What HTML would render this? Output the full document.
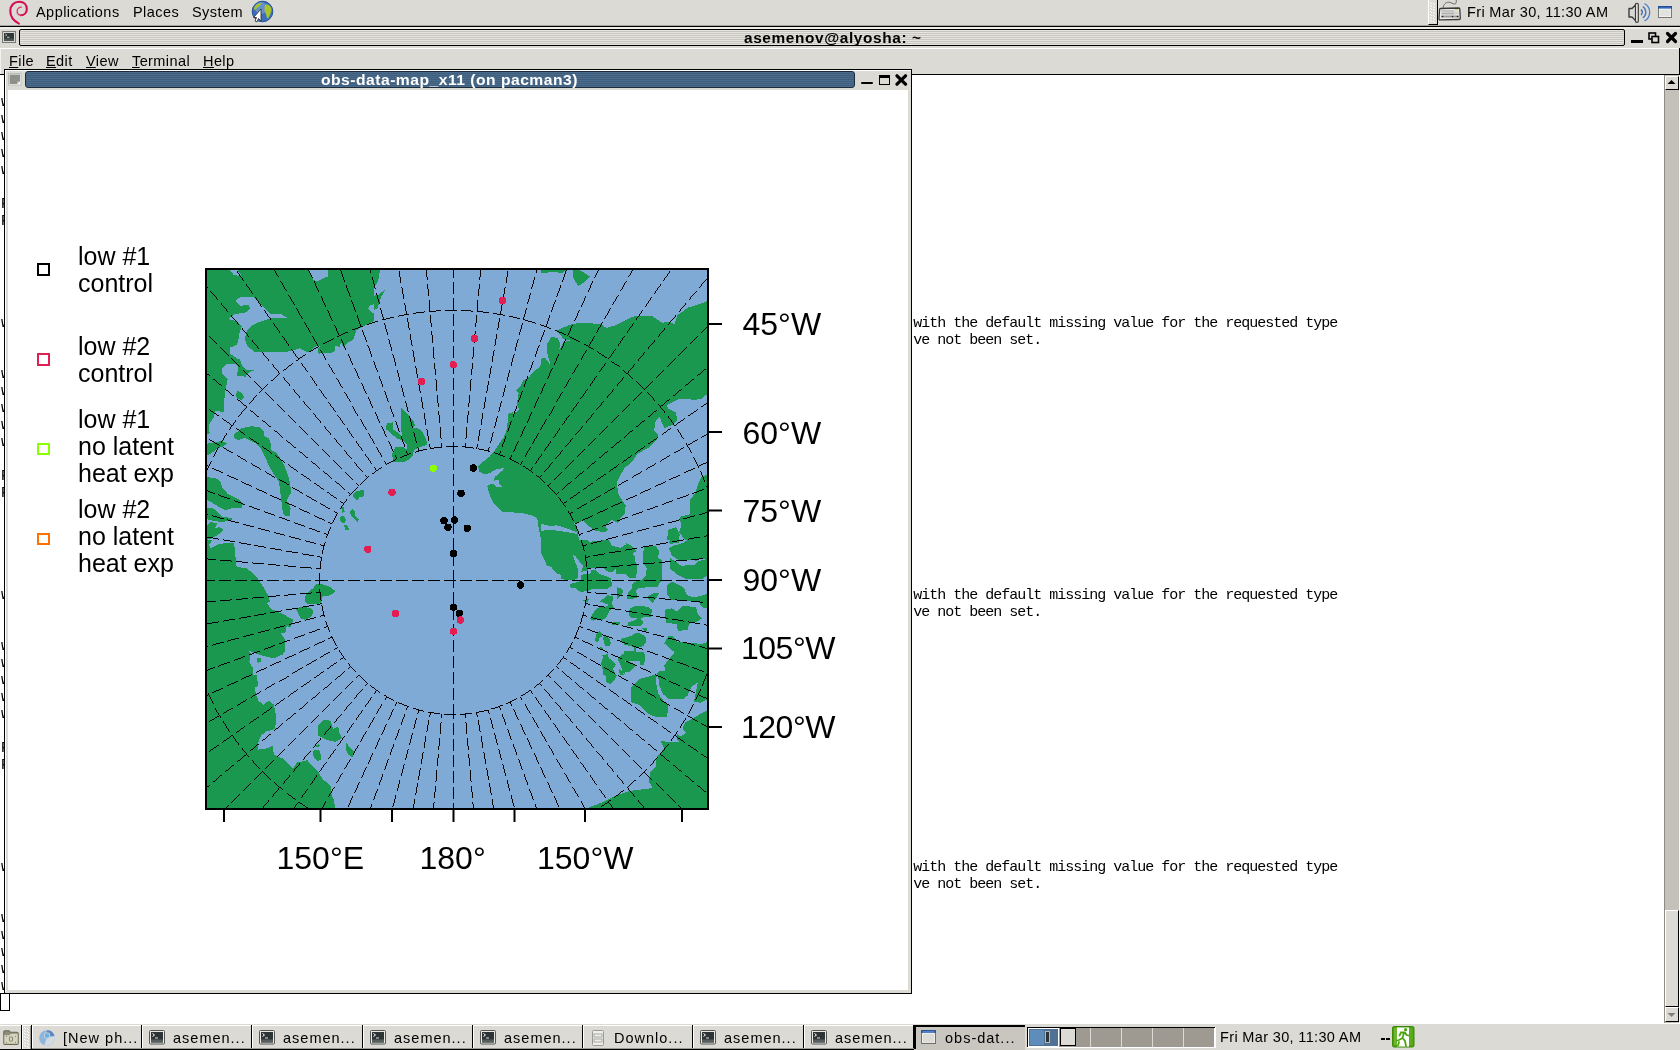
<!DOCTYPE html>
<html><head><meta charset="utf-8">
<style>
*{margin:0;padding:0;box-sizing:border-box}
html,body{width:1680px;height:1050px;overflow:hidden;background:#dcdad5;font-family:"Liberation Sans",sans-serif;color:#000}
#root{position:absolute;left:0;top:0;width:1680px;height:1050px;will-change:transform}
.a{position:absolute}
.ui{font-family:"Liberation Sans",sans-serif;font-size:14px;white-space:nowrap;line-height:1}
.mono{font-family:"Liberation Mono",monospace;font-size:15px;letter-spacing:-1px;line-height:17px;white-space:pre;color:#000}
.stripe{background:repeating-linear-gradient(to bottom,#e6e4e0 0,#e6e4e0 1px,#c9c6c0 1px,#c9c6c0 2px)}
.bstripe{background:repeating-linear-gradient(to bottom,#4c6c8c 0,#4c6c8c 1px,#3f5e7e 1px,#3f5e7e 2px)}
.tbt{position:absolute;top:3px;font-size:14.5px;letter-spacing:1px;white-space:nowrap;line-height:1}
u{text-decoration:underline;text-underline-offset:1px}
</style></head><body><div id="root">
<svg width="0" height="0" style="position:absolute">
<defs>
<symbol id="ic-term" viewBox="0 0 16 16">
  <rect x="0.5" y="0.5" width="15" height="13.5" rx="1" fill="#e8e8e4" stroke="#555753"/>
  <rect x="2" y="2" width="12" height="10.5" fill="#2e3436"/>
  <rect x="2" y="9.5" width="12" height="3" fill="#555e5c"/>
  <path d="M3.5 3.5 L5.5 5 L3.5 6.5" stroke="#fff" stroke-width="1" fill="none"/>
  <rect x="6" y="7.5" width="3" height="1" fill="#ddd"/>
</symbol>
<symbol id="ic-chrome" viewBox="0 0 16 16">
  <circle cx="8" cy="8" r="7.8" fill="#8fb4dd"/>
  <path d="M8 0.2 A7.8 7.8 0 0 1 15.5 6 L8 6 Z" fill="#5e86c0"/>
  <path d="M15.5 6 A7.8 7.8 0 0 1 5 15.2 L8 8 Z" fill="#d4dae2"/>
  <circle cx="8" cy="5.5" r="3.2" fill="#c8ccd0"/>
  <circle cx="8" cy="5.5" r="2.2" fill="#5fb2ea"/>
</symbol>
<symbol id="ic-dl" viewBox="0 0 16 16">
  <rect x="2.5" y="0.5" width="11" height="15" rx="1" fill="#eeeeec" stroke="#9a9a96"/>
  <rect x="4" y="4" width="8" height="3" fill="none" stroke="#a8a8a4"/>
  <rect x="4" y="9" width="8" height="3" fill="none" stroke="#a8a8a4"/>
</symbol>
<symbol id="ic-win" viewBox="0 0 16 16">
  <rect x="0.5" y="0.5" width="14" height="13" fill="#eeeeec" stroke="#6e6e6a"/>
  <rect x="0" y="0" width="15" height="3" fill="#2a55a0"/>
  <rect x="1.5" y="1.5" width="12" height="1" fill="#84a8dc"/>
  <rect x="2" y="4" width="11" height="8.5" fill="#dcdcd8"/>
</symbol>
</defs></svg>
<!-- ===== TOP PANEL ===== -->
<div class="a" style="left:0;top:0;width:1680px;height:25px;background:#dcdad5"></div>
<div class="a" style="left:0;top:25px;width:1680px;height:1px;background:#aaa69e"></div>
<div class="a" style="left:0;top:26px;width:1680px;height:1px;background:#000"></div>
<svg class="a" style="left:4px;top:0" width="30" height="26" viewBox="0 0 30 26">
 <path d="M14.9 23.6 C10 21, 6.3 16.5, 6.3 11 C6.3 5.5, 10 1.8, 15.3 1.8 C19.8 1.8, 22.8 4.8, 22.8 9.2 C22.8 12.8, 20.2 15.2, 16.8 15.2" fill="none" stroke="#d70a53" stroke-width="2.1" stroke-linecap="round"/>
 <path d="M16.8 15.2 C14.6 15.2, 13.1 13.4, 13.1 11.1 C13.2 8.6, 15 7.1, 17.4 7.2" fill="none" stroke="#d83a6e" stroke-width="1.3" stroke-linecap="round"/>
</svg>
<div class="a ui" style="left:36px;top:5px;font-size:14.5px;letter-spacing:0.45px">Applications</div>
<div class="a ui" style="left:133px;top:5px;font-size:14.5px;letter-spacing:0.45px">Places</div>
<div class="a ui" style="left:192px;top:5px;font-size:14.5px;letter-spacing:0.45px">System</div>
<svg class="a" style="left:250px;top:0" width="26" height="26" viewBox="0 0 26 26">
 <circle cx="12.5" cy="11.5" r="10.3" fill="#3d6fb8" stroke="#1f4e9a" stroke-width="1"/>
 <circle cx="11" cy="8" r="6" fill="#7ea6dc" opacity="0.6"/>
 <path d="M15.5 4.5 C18 4 21 6 21.5 9 C21.8 12 20 14 19 17 C18 19 17 19 16.5 16 C16 13 14.5 12 14.5 9 C14.5 7 14.8 5 15.5 4.5Z" fill="#a8c42a"/>
 <path d="M5 6 C7 4 10 3 12 3.5 C11 5 9 6 7 8 C6 9 4.5 10 4 10 C4 8.5 4.3 7 5 6Z" fill="#a8c42a"/>
 <path d="M11 9 L11 21 L8.5 18.5 L7 22 L5 21 L6.5 17.5 L3.5 17.5 Z" fill="#fff" stroke="#333" stroke-width="0.9" stroke-linejoin="round"/>
</svg>
<!-- right side of panel -->
<div class="a" style="left:1428px;top:0;width:10px;height:25px;background:#dcdad5;border-left:1px solid #fff;border-right:1px solid #000;border-bottom:1px solid #000"></div>
<svg class="a" style="left:1429px;top:1px" width="7" height="23" shape-rendering="crispEdges"><g fill="#fff"><rect x="1" y="1" width="1" height="1"/><rect x="2" y="2" width="1" height="1"/><rect x="4" y="2" width="1" height="1"/><rect x="5" y="3" width="1" height="1"/><rect x="1" y="4" width="1" height="1"/><rect x="2" y="5" width="1" height="1"/><rect x="4" y="5" width="1" height="1"/><rect x="5" y="6" width="1" height="1"/><rect x="1" y="7" width="1" height="1"/><rect x="2" y="8" width="1" height="1"/><rect x="4" y="8" width="1" height="1"/><rect x="5" y="9" width="1" height="1"/><rect x="1" y="10" width="1" height="1"/><rect x="2" y="11" width="1" height="1"/><rect x="4" y="11" width="1" height="1"/><rect x="5" y="12" width="1" height="1"/><rect x="1" y="13" width="1" height="1"/><rect x="2" y="14" width="1" height="1"/><rect x="4" y="14" width="1" height="1"/><rect x="5" y="15" width="1" height="1"/><rect x="1" y="16" width="1" height="1"/><rect x="2" y="17" width="1" height="1"/><rect x="4" y="17" width="1" height="1"/><rect x="5" y="18" width="1" height="1"/><rect x="1" y="19" width="1" height="1"/><rect x="2" y="20" width="1" height="1"/><rect x="4" y="20" width="1" height="1"/><rect x="5" y="21" width="1" height="1"/></g></svg>
<svg class="a" style="left:1438px;top:0" width="24" height="22" viewBox="0 0 24 22">
 <path d="M5 8.5 C5.5 4, 8 2.2, 10.5 2.2 C13 2.2, 15 4.2, 17 4 C18.3 3.8, 18.3 2, 18.3 0" fill="none" stroke="#6a6a68" stroke-width="1"/>
 <path d="M2.5 8.5 L20.5 8 Q21.5 8 21.8 9 L22.3 18.5 Q22.3 19.5 21 19.5 L2 19.8 Q0.8 19.8 1 18.6 L1.6 9.3 Q1.8 8.5 2.5 8.5 Z" fill="#ececea" stroke="#3a3a3a" stroke-width="1.3"/>
 <rect x="3.5" y="10" width="13" height="2" fill="#c4c4c2"/>
 <rect x="3.5" y="12.5" width="13" height="2" fill="#b0b0ae"/>
 <rect x="17" y="11.5" width="3.5" height="3" fill="#d0d0ce"/>
 <rect x="3" y="15.5" width="18" height="2" fill="#9a9a98"/>
 <rect x="17" y="9.2" width="3" height="1.1" fill="#d4d43a"/>
 <circle cx="4.5" cy="16.5" r="0.8" fill="#222"/><circle cx="14.5" cy="16.5" r="0.8" fill="#222"/><circle cx="19.5" cy="16.5" r="0.8" fill="#222"/>
</svg>
<div class="a ui" style="left:1467px;top:5px;font-size:14.5px;letter-spacing:0.35px">Fri Mar 30, 11:30 AM</div>
<svg class="a" style="left:1626px;top:2px" width="26" height="22" viewBox="0 0 26 22">
 <path d="M3 6.5 L6 6.5 L10 2.5 L10 19 L6 15 L3 15 Z" fill="#d8d8d6" stroke="#3c3c3a" stroke-width="1.4" stroke-linejoin="round"/>
 <rect x="9.5" y="1.3" width="2.8" height="19" rx="1.3" fill="#eee" stroke="#3c3c3a" stroke-width="1.2"/>
 <path d="M15 7.5 A4 4 0 0 1 15 13" fill="none" stroke="#3565ad" stroke-width="1.3"/>
 <path d="M16.8 4.5 A7 7 0 0 1 16.8 16" fill="none" stroke="#3f73bd" stroke-width="1.3"/>
 <path d="M18.5 1.5 A10 10 0 0 1 18.5 19" fill="none" stroke="#4a80c8" stroke-width="1.3"/>
</svg>
<svg class="a" style="left:1658px;top:6px" width="14" height="12" viewBox="0 0 14 12">
 <rect x="0.5" y="0.5" width="13" height="11" fill="#fff" stroke="#777773"/>
 <rect x="0" y="0" width="14" height="2.6" fill="#1d4c9a"/>
 <rect x="1" y="1.7" width="12" height="1" fill="#7aa4dc"/>
 <rect x="1.5" y="3.5" width="11" height="7" fill="#e2e2de"/>
</svg>

<!-- ===== TERMINAL FRAME ===== -->
<div class="a" style="left:0;top:27px;width:1680px;height:2px;background:#f0eee9"></div>
<svg class="a" style="left:2px;top:31px" width="14" height="12" viewBox="0 0 14 12">
 <rect x="0.5" y="0.5" width="13" height="11" fill="#d8d8d4" stroke="#7a7a76"/>
 <rect x="2" y="2" width="10" height="8" fill="#2f3a38"/>
 <rect x="2" y="7.5" width="10" height="2.5" fill="#4c5654"/>
 <path d="M3.3 3 L4.8 4 L3.3 5" stroke="#cfd4d2" stroke-width="0.8" fill="none"/>
 <rect x="5" y="5.8" width="2.5" height="0.9" fill="#cfd4d2"/>
</svg>
<div class="a stripe" style="left:19px;top:29px;width:1606px;height:17px;border:1px solid #000;border-radius:2px"></div>
<div class="a ui" style="left:744px;top:31px;font-size:14px;font-weight:bold;letter-spacing:0.55px;transform:scaleX(1.1);transform-origin:0 0">asemenov@alyosha: ~</div>
<div class="a" style="left:1631px;top:40px;width:12px;height:2.5px;background:#000"></div>
<svg class="a" style="left:1648px;top:32px" width="12" height="12" viewBox="0 0 12 12">
 <rect x="1" y="1" width="6.5" height="6" fill="none" stroke="#000" stroke-width="1.6"/>
 <rect x="4" y="4.5" width="6.5" height="6" fill="#dcdad5" stroke="#000" stroke-width="1.6"/>
</svg>
<svg class="a" style="left:1665px;top:31px" width="13" height="13" viewBox="0 0 13 13">
 <path d="M2.5 2.5 L10.5 10.5 M10.5 2.5 L2.5 10.5" stroke="#000" stroke-width="3.2" stroke-linecap="round"/>
</svg>
<!-- menubar -->
<div class="a" style="left:0;top:48px;width:1680px;height:1px;background:#fff"></div>
<div class="a" style="left:1px;top:49px;width:1678px;height:25px;background:#dcdad5"></div>
<div class="a" style="left:0;top:49px;width:1px;height:25px;background:#f4f3f0"></div>
<div class="a" style="left:1679px;top:48px;width:1px;height:27px;background:#000"></div>
<div class="a" style="left:0;top:74px;width:1680px;height:1px;background:#000"></div>
<div class="a ui" style="left:9px;top:54px;font-size:14.5px;letter-spacing:0.4px"><u>F</u>ile</div>
<div class="a ui" style="left:46px;top:54px;font-size:14.5px;letter-spacing:0.4px"><u>E</u>dit</div>
<div class="a ui" style="left:86px;top:54px;font-size:14.5px;letter-spacing:0.4px"><u>V</u>iew</div>
<div class="a ui" style="left:132px;top:54px;font-size:14.5px;letter-spacing:0.4px"><u>T</u>erminal</div>
<div class="a ui" style="left:203px;top:54px;font-size:14.5px;letter-spacing:0.4px"><u>H</u>elp</div>

<!-- terminal content -->
<div class="a" style="left:0;top:75px;width:1680px;height:949px;background:#fff"></div>
<pre class="a mono" style="left:1px;top:77px">

warning:
warning:
warning:
warning:
warning:

R:
R:





w                                                                                                                 with the default missing value for the requested type
                                                                                                                  ve not been set.

warning:
warning:
warning:
warning:
warning:

R:
R:





w                                                                                                                 with the default missing value for the requested type
                                                                                                                  ve not been set.

warning:
warning:
warning:
warning:
warning:

R:
R:





w                                                                                                                 with the default missing value for the requested type
                                                                                                                  ve not been set.

warning:
warning:
warning:
warning:
warning:
</pre>
<div class="a" style="left:0;top:993px;width:10px;height:18px;border:1px solid #000"></div>
<!-- scrollbar -->
<div class="a" style="left:1664px;top:75px;width:15px;height:948px;background:#c4c1ba;border-left:1px solid #8f8b84"></div>
<div class="a" style="left:1665px;top:76px;width:14px;height:14px;background:#dcdad5;border-top:1px solid #fff;border-left:1px solid #fff;border-right:1px solid #000;border-bottom:1px solid #000"></div>
<svg class="a" style="left:1667px;top:79px" width="9" height="6"><path d="M0.5 5 L4.5 1 L8.5 5Z" fill="#000"/></svg>
<div class="a" style="left:1665px;top:910px;width:14px;height:97px;background:#dcdad5;border-top:1px solid #fff;border-left:1px solid #fff;border-right:1px solid #000;border-bottom:1px solid #000"></div>
<div class="a" style="left:1665px;top:1007px;width:14px;height:15px;background:#dcdad5;border-top:1px solid #fff;border-left:1px solid #fff;border-right:1px solid #000;border-bottom:1px solid #000"></div>
<svg class="a" style="left:1667px;top:1012px" width="9" height="6"><path d="M0.5 1 L4.5 5 L8.5 1Z" fill="#808080"/></svg>
<!-- ===== X11 WINDOW ===== -->
<div class="a" style="left:4px;top:69px;width:908px;height:925px;background:#dcdad5;border:1px solid #000"></div>
<div class="a" style="left:5px;top:70px;width:906px;height:1px;background:#fff"></div>
<div class="a" style="left:5px;top:70px;width:1px;height:922px;background:#fff"></div>
<svg class="a" style="left:8px;top:73px" width="14" height="13" viewBox="0 0 14 13">
 <rect x="0.5" y="0.5" width="12.5" height="11.5" fill="#fff" stroke="#bcbcb8"/>
 <path d="M1.5 1.5 L12 1.5 L12 8.5 L9 11 L1.5 11 Z" fill="#8e908c"/>
 <path d="M9 11 L12 8.5 L9.5 8.5Z" fill="#cfcfcc"/>
</svg>
<div class="a bstripe" style="left:25px;top:71px;width:830px;height:17px;border:1px solid #1b2b3b;border-radius:3px"></div>
<div class="a ui" style="left:321px;top:73px;color:#fff;font-size:14.5px;letter-spacing:0.45px;font-weight:bold;transform:scaleX(1.08);transform-origin:0 0">obs-data-map_x11 (on pacman3)</div>
<div class="a" style="left:861px;top:82px;width:12px;height:2px;background:#000;border-radius:1px"></div>
<div class="a" style="left:879px;top:75px;width:11px;height:10px;border:1.5px solid #000;border-top-width:3px"></div>
<svg class="a" style="left:895px;top:74px" width="13" height="12" viewBox="0 0 13 12">
 <path d="M2 1.8 L10.5 10.2 M10.5 1.8 L2 10.2" stroke="#000" stroke-width="3.2" stroke-linecap="round"/>
</svg>
<div class="a" style="left:8px;top:90px;width:900px;height:900px;background:#fff;overflow:hidden">

</div>
<svg class="a" style="left:0;top:0" width="912" height="992" viewBox="0 0 912 992">
<defs><clipPath id="mapclip"><rect x="207" y="270" width="500" height="538"/></clipPath></defs>
<rect x="207" y="270" width="500" height="538" fill="#80aad6"/>
<g clip-path="url(#mapclip)" shape-rendering="crispEdges">
<clipPath id="tc1"><rect x="207" y="270" width="167" height="135"/></clipPath>
<g clip-path="url(#tc1)">
<polygon fill="#1a9850" points="207,270 374,270 374,405 207,405"/>
<polygon fill="#80aad6" points="374,320.8 365.1,325.3 356.1,330.4 353.6,339.4 347.1,343.3 343.3,347.1 341.3,342.6 339.4,347.1 335.6,345.9 334.3,352.3 318.8,353.6 317.6,349.7 320.1,345.9 316.3,345.9 308.6,352.3 303.4,350.4 299.6,348.4 293.1,350.4 288,351.6 254.6,351.6 246.9,345.9 244.9,338.1 246.9,330.4 252,325.3 261,321.4 271.3,318.2 286.7,317.6 281.6,314.4 270,313.7 263.6,307.3 258.4,301.5 253.3,297 240.4,297 235.3,300.9 240.4,306 248.1,304.7 250.1,308.6 245.6,312.4 234,314.4 228.2,318.9 236.6,321.4 241.7,326.6 239.8,331.7 238.5,339.4 237.2,344.6 229.5,347.8 230.1,353.6 237.2,358.7 239.8,358.7 241.7,365.1 246.9,370.3 254.6,370.3 248.1,372.8 245.6,376.7 236.6,375.4 238.5,367.7 235.9,363.8 226.3,363.8 222.4,367.7 222.4,374.1 227.6,379.3 226.3,385.7 225,393.4 223.7,405 374,405"/>
<polygon fill="#80aad6" points="374,304.1 369.6,305.4 368.3,308.6 371.6,312.4 374,313.7"/>
<polygon fill="#80aad6" points="230.1,270 233.4,274.5 237.9,275.8 241.1,275.1 237.2,270"/>
<polygon fill="#80aad6" points="308.6,270 313.7,280.3 318.8,280.9 322.7,278.4 327.8,276.4 328.5,270"/>
<polygon fill="#1a9850" points="236.6,392.1 237.9,390.8 242.4,393.4 244.3,397.3 241.7,399.8 237.9,399.2 235.9,396"/>
</g>
<polygon fill="#1a9850" points="374,270 379.8,270 379.1,277.7 376.6,284.1 374,286.7"/>
<polygon fill="#1a9850" points="374,295.7 377.9,295.1 385.6,289.3 381.1,297 379.8,302.1 377.2,308.6 374,309.9"/>
<polygon fill="#1a9850" points="541,363.8 539.2,367.7 533.4,371.6 529.6,376.7 523.1,380.6 520.6,385.7 516.1,390.2 518.6,393.4 516.7,405 541,405"/>
<polygon fill="#1a9850" points="541,358.7 544.9,357.4 550.6,365.1 547.4,353.6 546.8,344.6 551.3,336.9 557.7,338.1 560.3,343.3 559,350.4 563.5,342 571.9,340.1 564.1,339.4 556.4,330.4 571.9,324 582.1,322.7 600.1,324 606.6,327.9 615.6,325.3 631,317.6 637.4,315.6 652.8,316.3 661.8,322.7 669.6,322.1 674.7,324 677.3,315 688.8,307.3 697.8,304.7 708,300.9 708,393.4 701.7,398.6 695.3,399.8 679.8,398.6 667,405 541,405"/>
<polygon fill="#1a9850" points="541,270 566.7,270 561.6,273.2 553.9,271.9 541,273.2"/>
<polygon fill="#1a9850" points="573.1,270 579.6,270 589.9,276.4 583.4,282.9 578.3,286.1 573.1,277.7"/>
<polygon fill="#1a9850" points="207,405 223.7,405 223.7,412.1 214.7,410.8 214.1,416.6 210.9,421.7 208.9,425.6 209.6,433.3 207,433.9"/>
<polygon fill="#1a9850" points="207,443.6 214.7,442.3 222.4,441 226.9,443.6 223.7,446.1 217.3,448.7 212.1,452.6 207,455.8"/>
<polygon fill="#1a9850" points="233.4,437.1 234,434.6 241.7,428.1 252,426.2 259.7,427.5 263.6,430.7 263.6,435.9 268.7,438.4 271.3,444.9 271.3,450 276.4,452.6 281.6,460.3 284.1,465.4 286.7,471.9 289.3,479.6 290.6,487.3 290.6,493.7 286.7,500.1 290.6,507.8 289.9,515.6 285.4,515.6 282.9,513 281.6,502.7 280.3,492.4 279,482.1 273.9,474.4 268.7,465.4 264.9,456.4 261,448.7 255.9,443.6 249.4,440.4 244.3,437.8 237.9,440.4"/>
<polygon fill="#1a9850" points="207,477 216,478.3 221.1,482.1 221.8,487.3 227.6,493.7 237.9,498.8 243,504 241.7,507.8 232.7,507.8 226.3,510.4 218.6,506.6 212.1,502.7 207,500.1"/>
<polygon fill="#1a9850" points="207,507.8 213.4,508.5 218.6,513 222.4,516.8 232.7,518.1 231.4,520.7 221.1,522 213.4,520.7 207,519.4"/>
<polygon fill="#1a9850" points="207,525.8 210.9,522 217.3,523.3 214.7,528.4 219.9,527.1 223.7,529.7 219.9,533.6 213.4,537.4 207,540"/>
<polygon fill="#1a9850" points="352.3,495 356.1,491.1 363.8,489.8 363.8,496.3 358.7,497.6 358.1,500.8 354.8,498.8"/>
<polygon fill="#1a9850" points="341.3,507.8 343.3,506.6 344.6,511.7 342,513"/>
<polygon fill="#1a9850" points="349.7,511.7 352.3,509.1 354.8,511.7 355.5,515.6 358.7,519.4 357.4,522 353.6,518.1 351,515.6"/>
<polygon fill="#1a9850" points="339.4,518.1 342,515.6 345.2,516.8 345.8,520.7 344.6,523.3 340.7,522"/>
<polygon fill="#1a9850" points="343.9,525.8 345.8,524.6 348.4,527.1 349.1,530.3 345.8,530.3"/>
<polygon fill="#1a9850" points="385.6,428.8 386.9,423 392.6,422.4 393.3,429.4 399.7,433.9 401.6,435.9 401,407.6 408.1,414.6 413.9,421.7 415.1,425.6 412.6,428.1 416.4,427.5 421.6,430.7 425.4,437.1 427.4,444.9 419,447.4 413.9,450 412.6,456.4 408.7,459.6 404.9,461.6 393.3,461.6 392,453.9 395.2,447.4 402.3,446.8 406.8,449.4 407.4,444.9 403.6,441 397.1,438.4 390.7,433.3"/>
<polygon fill="#1a9850" points="516.7,405 541,405 541,518.1 537.3,518.1 532.1,515.6 521.8,513 502.6,511.7 493.6,502.7 489.7,495 487.1,486 492.3,483.4 497.4,487.3 502.6,487.3 498.7,483.4 498.7,479.6 493.6,480.9 494.8,477 502.6,470.6 503.8,468 496.1,469.3 489.7,473.1 484.6,474.4 479.4,471.9 478.1,466.7 483.3,461.6 489.7,456.4 496.1,448.7 500,442.3 503.8,437.1 506.4,430.7 507.7,421.7 507.7,414 512.8,412.1 513.5,414 519.3,409.5"/>
<polygon fill="#1a9850" points="541,518.1 537.3,518.1 538.6,527.1 541,540"/>
<clipPath id="tc2"><rect x="541" y="405" width="167" height="135"/></clipPath>
<g clip-path="url(#tc2)">
<polygon fill="#1a9850" points="541,405 667,405 668.3,408.9 676,412.7 677.3,420.4 673.4,424.3 664.4,428.1 659.3,416.6 655.4,421.7 654.1,430.7 658,434.6 656.7,439.7 649,447.4 637.4,453.9 632.3,461.6 624.6,468 619.4,477 616.9,482.1 618.1,493.7 622,500.1 625.8,505.3 624.6,514.3 620.7,518.1 618.1,523.3 611.7,519.4 605.3,525.8 607.9,529.7 605.3,532.3 596.3,531 589.9,527.1 583.4,520.7 574.4,523.3 578.3,533.6 580.9,540 541,540"/>
<polygon fill="#80aad6" points="541,523.9 552.6,526.5 556.4,525.2 566.7,528.4 577,532.3 579.6,540 586,540 580.9,534.8 575.7,533.6 560.3,531 548.7,529.7 541,531"/>
<polygon fill="#1a9850" points="708,474.4 701.7,477 697.8,484.7 695.3,492.4 690.1,500.1 690.1,514.3 679.8,516.8 681.1,525.8 679.2,532.3 685,540 708,540"/>
<polygon fill="#1a9850" points="667,540 668.3,529.7 676,527.1 679.8,534.8 678.6,540"/>
</g>
<polygon fill="#1a9850" points="207,540 212.8,540 208.9,544.5 210.9,548.4 218.6,543.9 234,542.6 236.6,567 246.9,568.3 257.1,577.3 263.6,587.6 267.4,594 270,601.7 266.8,603 271.3,609.4 275.1,610.7 284.1,614.6 293.1,619.7 290.6,627.4 286.7,626.1 285.4,632.6 280.3,632.6 285.4,640.3 285.4,650.6 282.9,654.4 273.9,658.3 262.3,655.7 254.6,653.1 245.6,649.3 237.9,645.4 243,646.7 250.7,653.1 249.4,662.1 253.3,668.6 253.3,675 207,675"/>
<polygon fill="#1a9850" points="256.5,658.3 260.4,657.6 261,662.1 257.8,662.8"/>
<polygon fill="#1a9850" points="306,594 313.7,587.6 315.6,584.4 322.7,584.4 330.4,586.9 335.6,591.4 330.4,595.3 322.7,596.6 320.8,603 316.3,604.3 307.3,604.3 304.7,600.4"/>
<polygon fill="#1a9850" points="295.7,608.1 302.1,606.9 311.1,608.1 313.7,612 311.1,617.1 304.7,619.7 300.8,618.4 298.3,613.3"/>
<polygon fill="#1a9850" points="541,540 587.6,540 588.9,541.6 598,541.3 602.5,540 609,540 612.2,545.8 620.7,547.8 625,545.2 625,573.7 616.1,573.7 615.5,568.5 612.9,572.4 609,572.4 603.8,568.5 592.8,567.8 588.9,568.5 587.6,571.1 581.2,571.7 583.1,565.9 581.2,564 575.3,556.2 572.7,554.9 577.9,569.1 577.9,577.6 575.3,579.5 568.2,580.5 561.1,578.9 560.4,574.3 557.2,573.7 550.7,566.6 546.8,565.3 544.2,559.4 541,553"/>
<polygon fill="#1a9850" points="581.2,575 586.3,573.7 590.2,573.7 591.5,570.4 595.4,569.8 599.3,573.7 610.9,578.2 612.2,585.3 607.7,588.6 591.5,589.2 588.3,591.2 579.9,591.8 576,588.6 570.1,587.3 570.1,584 577.3,582.1 581.2,580.2"/>
<polygon fill="#1a9850" points="616.8,587.3 620.7,587.9 623.3,590.5 622,594.4 617.4,599.6"/>
<polygon fill="#1a9850" points="599.9,601.5 607.7,595.1 612.9,596.3 612.2,604.8 614.8,609.2 600.6,609.2 609,604.8"/>
<polygon fill="#1a9850" points="583.1,600.2 588.9,598.9 587.6,601.5 585.7,602.2"/>
<polygon fill="#1a9850" points="624,546.5 626.6,543.2 630.5,545.2 637,551 632.4,553.6 635,556.8 635,561.4 637,565.3 636.3,577.6 629.2,578.2 624,572.4"/>
<polygon fill="#1a9850" points="644.1,545.8 655.1,545.8 659.6,551 657.7,557.5 662.2,560.7 662.2,578.9 657.7,586.6 638.9,587.9 636.3,590.5 637,598.3 627.2,598.9 627.9,593.1 631.8,589.2 632.4,584 635.7,581.4 642.1,579.5 646,575 646.7,568.5 643.4,562.7 643.4,552.3"/>
<polygon fill="#1a9850" points="668.7,548.4 673.2,545.8 682.3,543.2 688.1,540 708,540 708,559.4 697.8,559.4 697.2,561.4 691.4,559.4 682.3,560.7 677.1,559.4 671.9,555.5"/>
<polygon fill="#1a9850" points="670,558.1 675.2,561.4 681,565.6 694.6,565.3 697.8,561.4 708,558.8 708,575 701.7,579.5 686.2,578.9 677.8,575 670,568.5"/>
<polygon fill="#1a9850" points="668,541.9 670.6,540 679.7,540 679.1,542.6 670.6,543.9"/>
<polygon fill="#1a9850" points="667.1,585.3 671.9,581.4 684.2,587.9 686.8,595.1 693.9,597.6 708,593.8 708,608 703,608 698.5,602.2 685.5,600.9 670.6,600.2 666.7,593.1"/>
<polygon fill="#1a9850" points="646.7,597 653.8,593.1 659,593.1 656.4,598.3 652.5,602.8"/>
<polygon fill="#1a9850" points="631.8,608 634.4,606.1 644.7,606.1 648,608"/>
<polygon fill="#1a9850" points="681,608 682.3,606.1 688.8,606.1 696.5,608"/>
<polygon fill="#1a9850" points="590.9,616.7 596.1,608.9 600.6,607 612.2,607 609,612.2 605.8,618 602.5,620 596.1,619.3 593.5,620.9 590.2,618.7"/>
<polygon fill="#1a9850" points="611.6,622.5 620.7,621.9 618.7,624.8 612.2,624.8"/>
<polygon fill="#1a9850" points="596.1,634.2 599.9,631 601.9,632.9 601.9,636.8 599.3,638.1 598,642.6 595.1,640.7"/>
<polygon fill="#1a9850" points="603.2,636.8 605.8,636.1 609.7,638.7 610.9,643.3 609,646.5 605.1,645.9 603.8,642"/>
<polygon fill="#1a9850" points="598,648.4 601.2,647.2 603.2,649.1 600.6,649.7"/>
<polygon fill="#1a9850" points="620,638.7 625,638.1 625,643.3 623.9,643.9"/>
<polygon fill="#1a9850" points="601.9,654.9 607.7,654.3 609,658.2 612.9,660.8 616.1,664.6 612.9,668.5 616.1,675 603.2,675 602.5,668.5 601.2,663.3 603.2,657.5"/>
<polygon fill="#1a9850" points="617.4,658.8 625,652.3 625,675 622.6,671.8 620.7,665.3"/>
<polygon fill="#1a9850" points="618.7,668.5 621.3,670.5 624.5,675 620,675"/>
<polygon fill="#1a9850" points="629.8,608.9 632.4,607 648,607 651.8,609.6 651.2,616.7 643.4,617.4 640.2,618.7 643.4,622.5 640.8,625.8 627.2,625.8 628.5,622.5 637,619.3 637,618 631.8,618 628.5,615.4 629.2,612.2"/>
<polygon fill="#1a9850" points="665.4,609.6 671.9,608.3 677.1,611.5 681,607 695.9,607 697.8,614.1 701.7,618.7 696.5,621.9 688.8,623.8 688.1,629.7 677.8,631 676.5,623.8 666.7,623.2 665.4,618.7"/>
<polygon fill="#1a9850" points="642.1,628.4 646.7,628.4 646.7,631 644.7,631"/>
<polygon fill="#1a9850" points="624,638.1 630.5,636.1 637,632.3 645.4,636.1 646,642 643.4,645.9 635.7,648.4 635.7,651.7 644.1,652.3 645.4,657.5 644.1,664.6 640.2,664.6 639.5,661.4 633.1,660.8 624,661.4 624,651 633.7,651 634.4,647.2 624,644.6"/>
<polygon fill="#1a9850" points="624,662.7 627.2,660.8 636.3,665.3 629.8,671.8 624,671.8"/>
<polygon fill="#1a9850" points="664.2,643.3 668.7,635.5 671.9,635.5 677.8,642 694.6,643.3 701.7,643.9 708,642 708,675 656.4,675 659,671.1 665.4,671.1 664.2,665.3 669.3,658.8 674.5,652.3"/>
<polygon fill="#1a9850" points="207,675 256.5,675 258.4,685.3 254.6,687.9 255.9,694.3 258.4,700.7 263.6,704.6 268.7,700.7 273.9,704.6 276.4,717.4 275.1,729 266.1,731.6 261,735.4 258.4,741.9 258.4,749.6 267.4,748.3 272.6,745.7 273.9,754.7 282.9,758.6 293.1,768.8 297,762.4 304.7,761.1 307.3,759.8 308.6,762.4 318.8,772.7 322.7,779.1 330.4,785.6 331.7,795.8 334.3,801 334.9,810 207,810"/>
<polygon fill="#1a9850" points="317.6,726.4 324,720 330.4,720.6 333,729 338.1,726.4 339.4,732.9 342,738 335.6,741.9 329.1,740.6 322.7,738 317.6,735.4"/>
<polygon fill="#1a9850" points="312.4,750.9 316.3,749.6 320.1,750.9 321.4,759.8 317.6,761.1 313.7,757.3"/>
<polygon fill="#1a9850" points="315,745.7 318.8,744.4 320.1,746.4 316.3,747"/>
<polygon fill="#1a9850" points="345.8,741.9 348.4,745.7 354.8,752.1 352.3,757.3 348.4,754.7 345.8,749.6"/>
<polygon fill="#1a9850" points="605.3,675 616.9,675 614.3,680.1 610.4,684 606.6,682.7"/>
<polygon fill="#1a9850" points="631,687.9 640,678.9 654.1,675 656.7,675 656.1,682.7 658,693 664.4,702 668.3,705.9 667,717.4 656.7,717.4 647.7,713.6 638.7,704.6 631,702"/>
<polygon fill="#1a9850" points="658,675 708,675 708,699.4 700.4,702.6 694,702 697.8,682.7 691.4,686.6 687.6,695.6 682.4,699.4 669.6,699.4 663.1,694.3 659.3,685.3"/>
<polygon fill="#1a9850" points="708,709.7 696.6,716.1 685,722.6 682.4,729 686.3,732.9 679.8,736.7 677.3,734.1 677.3,739.3 679.8,741.9 670.8,741.9 660.6,741.2 664.4,748.3 656.7,757.3 655.4,767.6 650.3,772.7 649,781.7 652.8,788.1 631,790.7 618.1,794.6 602.7,802.3 588.6,807.4 588.6,810 708,810"/>
</g>
<g clip-path="url(#mapclip)" shape-rendering="crispEdges">
<circle cx="453.5" cy="580.5" r="134" fill="none" stroke="#000" stroke-width="0.99" stroke-dasharray="12 4"/>
<circle cx="453.5" cy="580.5" r="270.1" fill="none" stroke="#000" stroke-width="0.99" stroke-dasharray="12 4"/>
<line x1="453.5" y1="580.5" x2="453.5" y2="446.5" stroke="#000" stroke-width="0.99" stroke-dasharray="12 4" stroke-dashoffset="1.5"/>
<line x1="453.5" y1="310.4" x2="453.5" y2="446.5" stroke="#000" stroke-width="0.99" stroke-dasharray="12 4" stroke-dashoffset="12"/>
<line x1="453.5" y1="310.4" x2="453.5" y2="-119.5" stroke="#000" stroke-width="0.99" stroke-dasharray="12 4"/>
<line x1="477" y1="311.5" x2="465.2" y2="447" stroke="#000" stroke-width="0.99" stroke-dasharray="12 4" stroke-dashoffset="12"/>
<line x1="477" y1="311.5" x2="514.5" y2="-116.8" stroke="#000" stroke-width="0.99" stroke-dasharray="12 4"/>
<line x1="500.4" y1="314.5" x2="476.8" y2="448.5" stroke="#000" stroke-width="0.99" stroke-dasharray="12 4" stroke-dashoffset="12"/>
<line x1="500.4" y1="314.5" x2="575.1" y2="-108.9" stroke="#000" stroke-width="0.99" stroke-dasharray="12 4"/>
<line x1="523.4" y1="319.6" x2="488.2" y2="451.1" stroke="#000" stroke-width="0.99" stroke-dasharray="12 4" stroke-dashoffset="12"/>
<line x1="523.4" y1="319.6" x2="634.7" y2="-95.6" stroke="#000" stroke-width="0.99" stroke-dasharray="12 4"/>
<line x1="545.9" y1="326.7" x2="499.3" y2="454.6" stroke="#000" stroke-width="0.99" stroke-dasharray="12 4" stroke-dashoffset="12"/>
<line x1="545.9" y1="326.7" x2="692.9" y2="-77.3" stroke="#000" stroke-width="0.99" stroke-dasharray="12 4"/>
<line x1="567.6" y1="335.7" x2="510.1" y2="459.1" stroke="#000" stroke-width="0.99" stroke-dasharray="12 4" stroke-dashoffset="12"/>
<line x1="567.6" y1="335.7" x2="749.3" y2="-53.9" stroke="#000" stroke-width="0.99" stroke-dasharray="12 4"/>
<line x1="588.5" y1="346.6" x2="520.5" y2="464.5" stroke="#000" stroke-width="0.99" stroke-dasharray="12 4" stroke-dashoffset="12"/>
<line x1="588.5" y1="346.6" x2="803.5" y2="-25.7" stroke="#000" stroke-width="0.99" stroke-dasharray="12 4"/>
<line x1="608.4" y1="359.3" x2="530.4" y2="470.7" stroke="#000" stroke-width="0.99" stroke-dasharray="12 4" stroke-dashoffset="12"/>
<line x1="608.4" y1="359.3" x2="855" y2="7.1" stroke="#000" stroke-width="0.99" stroke-dasharray="12 4"/>
<line x1="627.1" y1="373.6" x2="539.6" y2="477.9" stroke="#000" stroke-width="0.99" stroke-dasharray="12 4" stroke-dashoffset="12"/>
<line x1="627.1" y1="373.6" x2="903.5" y2="44.3" stroke="#000" stroke-width="0.99" stroke-dasharray="12 4"/>
<line x1="644.5" y1="389.5" x2="548.3" y2="485.7" stroke="#000" stroke-width="0.99" stroke-dasharray="12 4" stroke-dashoffset="12"/>
<line x1="644.5" y1="389.5" x2="948.5" y2="85.5" stroke="#000" stroke-width="0.99" stroke-dasharray="12 4"/>
<line x1="660.4" y1="406.9" x2="556.1" y2="494.4" stroke="#000" stroke-width="0.99" stroke-dasharray="12 4" stroke-dashoffset="12"/>
<line x1="660.4" y1="406.9" x2="989.7" y2="130.5" stroke="#000" stroke-width="0.99" stroke-dasharray="12 4"/>
<line x1="674.7" y1="425.6" x2="563.3" y2="503.6" stroke="#000" stroke-width="0.99" stroke-dasharray="12 4" stroke-dashoffset="12"/>
<line x1="674.7" y1="425.6" x2="1026.9" y2="179" stroke="#000" stroke-width="0.99" stroke-dasharray="12 4"/>
<line x1="687.4" y1="445.5" x2="569.5" y2="513.5" stroke="#000" stroke-width="0.99" stroke-dasharray="12 4" stroke-dashoffset="12"/>
<line x1="687.4" y1="445.5" x2="1059.7" y2="230.5" stroke="#000" stroke-width="0.99" stroke-dasharray="12 4"/>
<line x1="698.3" y1="466.4" x2="574.9" y2="523.9" stroke="#000" stroke-width="0.99" stroke-dasharray="12 4" stroke-dashoffset="12"/>
<line x1="698.3" y1="466.4" x2="1087.9" y2="284.7" stroke="#000" stroke-width="0.99" stroke-dasharray="12 4"/>
<line x1="707.3" y1="488.1" x2="579.4" y2="534.7" stroke="#000" stroke-width="0.99" stroke-dasharray="12 4" stroke-dashoffset="12"/>
<line x1="707.3" y1="488.1" x2="1111.3" y2="341.1" stroke="#000" stroke-width="0.99" stroke-dasharray="12 4"/>
<line x1="714.4" y1="510.6" x2="582.9" y2="545.8" stroke="#000" stroke-width="0.99" stroke-dasharray="12 4" stroke-dashoffset="12"/>
<line x1="714.4" y1="510.6" x2="1129.6" y2="399.3" stroke="#000" stroke-width="0.99" stroke-dasharray="12 4"/>
<line x1="719.5" y1="533.6" x2="585.5" y2="557.2" stroke="#000" stroke-width="0.99" stroke-dasharray="12 4" stroke-dashoffset="12"/>
<line x1="719.5" y1="533.6" x2="1142.9" y2="458.9" stroke="#000" stroke-width="0.99" stroke-dasharray="12 4"/>
<line x1="722.5" y1="557" x2="587" y2="568.8" stroke="#000" stroke-width="0.99" stroke-dasharray="12 4" stroke-dashoffset="12"/>
<line x1="722.5" y1="557" x2="1150.8" y2="519.5" stroke="#000" stroke-width="0.99" stroke-dasharray="12 4"/>
<line x1="453.5" y1="580.5" x2="587.5" y2="580.5" stroke="#000" stroke-width="0.99" stroke-dasharray="12 4" stroke-dashoffset="10"/>
<line x1="723.6" y1="580.5" x2="587.5" y2="580.5" stroke="#000" stroke-width="0.99" stroke-dasharray="12 4" stroke-dashoffset="12"/>
<line x1="723.6" y1="580.5" x2="1153.5" y2="580.5" stroke="#000" stroke-width="0.99" stroke-dasharray="12 4"/>
<line x1="722.5" y1="604" x2="587" y2="592.2" stroke="#000" stroke-width="0.99" stroke-dasharray="12 4" stroke-dashoffset="12"/>
<line x1="722.5" y1="604" x2="1150.8" y2="641.5" stroke="#000" stroke-width="0.99" stroke-dasharray="12 4"/>
<line x1="719.5" y1="627.4" x2="585.5" y2="603.8" stroke="#000" stroke-width="0.99" stroke-dasharray="12 4" stroke-dashoffset="12"/>
<line x1="719.5" y1="627.4" x2="1142.9" y2="702.1" stroke="#000" stroke-width="0.99" stroke-dasharray="12 4"/>
<line x1="714.4" y1="650.4" x2="582.9" y2="615.2" stroke="#000" stroke-width="0.99" stroke-dasharray="12 4" stroke-dashoffset="12"/>
<line x1="714.4" y1="650.4" x2="1129.6" y2="761.7" stroke="#000" stroke-width="0.99" stroke-dasharray="12 4"/>
<line x1="707.3" y1="672.9" x2="579.4" y2="626.3" stroke="#000" stroke-width="0.99" stroke-dasharray="12 4" stroke-dashoffset="12"/>
<line x1="707.3" y1="672.9" x2="1111.3" y2="819.9" stroke="#000" stroke-width="0.99" stroke-dasharray="12 4"/>
<line x1="698.3" y1="694.6" x2="574.9" y2="637.1" stroke="#000" stroke-width="0.99" stroke-dasharray="12 4" stroke-dashoffset="12"/>
<line x1="698.3" y1="694.6" x2="1087.9" y2="876.3" stroke="#000" stroke-width="0.99" stroke-dasharray="12 4"/>
<line x1="687.4" y1="715.5" x2="569.5" y2="647.5" stroke="#000" stroke-width="0.99" stroke-dasharray="12 4" stroke-dashoffset="12"/>
<line x1="687.4" y1="715.5" x2="1059.7" y2="930.5" stroke="#000" stroke-width="0.99" stroke-dasharray="12 4"/>
<line x1="674.7" y1="735.4" x2="563.3" y2="657.4" stroke="#000" stroke-width="0.99" stroke-dasharray="12 4" stroke-dashoffset="12"/>
<line x1="674.7" y1="735.4" x2="1026.9" y2="982" stroke="#000" stroke-width="0.99" stroke-dasharray="12 4"/>
<line x1="660.4" y1="754.1" x2="556.1" y2="666.6" stroke="#000" stroke-width="0.99" stroke-dasharray="12 4" stroke-dashoffset="12"/>
<line x1="660.4" y1="754.1" x2="989.7" y2="1030.5" stroke="#000" stroke-width="0.99" stroke-dasharray="12 4"/>
<line x1="644.5" y1="771.5" x2="548.3" y2="675.3" stroke="#000" stroke-width="0.99" stroke-dasharray="12 4" stroke-dashoffset="12"/>
<line x1="644.5" y1="771.5" x2="948.5" y2="1075.5" stroke="#000" stroke-width="0.99" stroke-dasharray="12 4"/>
<line x1="627.1" y1="787.4" x2="539.6" y2="683.1" stroke="#000" stroke-width="0.99" stroke-dasharray="12 4" stroke-dashoffset="12"/>
<line x1="627.1" y1="787.4" x2="903.5" y2="1116.7" stroke="#000" stroke-width="0.99" stroke-dasharray="12 4"/>
<line x1="608.4" y1="801.7" x2="530.4" y2="690.3" stroke="#000" stroke-width="0.99" stroke-dasharray="12 4" stroke-dashoffset="12"/>
<line x1="608.4" y1="801.7" x2="855" y2="1153.9" stroke="#000" stroke-width="0.99" stroke-dasharray="12 4"/>
<line x1="588.5" y1="814.4" x2="520.5" y2="696.5" stroke="#000" stroke-width="0.99" stroke-dasharray="12 4" stroke-dashoffset="12"/>
<line x1="588.5" y1="814.4" x2="803.5" y2="1186.7" stroke="#000" stroke-width="0.99" stroke-dasharray="12 4"/>
<line x1="567.6" y1="825.3" x2="510.1" y2="701.9" stroke="#000" stroke-width="0.99" stroke-dasharray="12 4" stroke-dashoffset="12"/>
<line x1="567.6" y1="825.3" x2="749.3" y2="1214.9" stroke="#000" stroke-width="0.99" stroke-dasharray="12 4"/>
<line x1="545.9" y1="834.3" x2="499.3" y2="706.4" stroke="#000" stroke-width="0.99" stroke-dasharray="12 4" stroke-dashoffset="12"/>
<line x1="545.9" y1="834.3" x2="692.9" y2="1238.3" stroke="#000" stroke-width="0.99" stroke-dasharray="12 4"/>
<line x1="523.4" y1="841.4" x2="488.2" y2="709.9" stroke="#000" stroke-width="0.99" stroke-dasharray="12 4" stroke-dashoffset="12"/>
<line x1="523.4" y1="841.4" x2="634.7" y2="1256.6" stroke="#000" stroke-width="0.99" stroke-dasharray="12 4"/>
<line x1="500.4" y1="846.5" x2="476.8" y2="712.5" stroke="#000" stroke-width="0.99" stroke-dasharray="12 4" stroke-dashoffset="12"/>
<line x1="500.4" y1="846.5" x2="575.1" y2="1269.9" stroke="#000" stroke-width="0.99" stroke-dasharray="12 4"/>
<line x1="477" y1="849.5" x2="465.2" y2="714" stroke="#000" stroke-width="0.99" stroke-dasharray="12 4" stroke-dashoffset="12"/>
<line x1="477" y1="849.5" x2="514.5" y2="1277.8" stroke="#000" stroke-width="0.99" stroke-dasharray="12 4"/>
<line x1="453.5" y1="580.5" x2="453.5" y2="714.5" stroke="#000" stroke-width="0.99" stroke-dasharray="12 4" stroke-dashoffset="4.7"/>
<line x1="453.5" y1="850.6" x2="453.5" y2="714.5" stroke="#000" stroke-width="0.99" stroke-dasharray="12 4" stroke-dashoffset="12"/>
<line x1="453.5" y1="850.6" x2="453.5" y2="1280.5" stroke="#000" stroke-width="0.99" stroke-dasharray="12 4"/>
<line x1="430" y1="849.5" x2="441.8" y2="714" stroke="#000" stroke-width="0.99" stroke-dasharray="12 4" stroke-dashoffset="12"/>
<line x1="430" y1="849.5" x2="392.5" y2="1277.8" stroke="#000" stroke-width="0.99" stroke-dasharray="12 4"/>
<line x1="406.6" y1="846.5" x2="430.2" y2="712.5" stroke="#000" stroke-width="0.99" stroke-dasharray="12 4" stroke-dashoffset="12"/>
<line x1="406.6" y1="846.5" x2="331.9" y2="1269.9" stroke="#000" stroke-width="0.99" stroke-dasharray="12 4"/>
<line x1="383.6" y1="841.4" x2="418.8" y2="709.9" stroke="#000" stroke-width="0.99" stroke-dasharray="12 4" stroke-dashoffset="12"/>
<line x1="383.6" y1="841.4" x2="272.3" y2="1256.6" stroke="#000" stroke-width="0.99" stroke-dasharray="12 4"/>
<line x1="361.1" y1="834.3" x2="407.7" y2="706.4" stroke="#000" stroke-width="0.99" stroke-dasharray="12 4" stroke-dashoffset="12"/>
<line x1="361.1" y1="834.3" x2="214.1" y2="1238.3" stroke="#000" stroke-width="0.99" stroke-dasharray="12 4"/>
<line x1="339.4" y1="825.3" x2="396.9" y2="701.9" stroke="#000" stroke-width="0.99" stroke-dasharray="12 4" stroke-dashoffset="12"/>
<line x1="339.4" y1="825.3" x2="157.7" y2="1214.9" stroke="#000" stroke-width="0.99" stroke-dasharray="12 4"/>
<line x1="318.5" y1="814.4" x2="386.5" y2="696.5" stroke="#000" stroke-width="0.99" stroke-dasharray="12 4" stroke-dashoffset="12"/>
<line x1="318.5" y1="814.4" x2="103.5" y2="1186.7" stroke="#000" stroke-width="0.99" stroke-dasharray="12 4"/>
<line x1="298.6" y1="801.7" x2="376.6" y2="690.3" stroke="#000" stroke-width="0.99" stroke-dasharray="12 4" stroke-dashoffset="12"/>
<line x1="298.6" y1="801.7" x2="52" y2="1153.9" stroke="#000" stroke-width="0.99" stroke-dasharray="12 4"/>
<line x1="279.9" y1="787.4" x2="367.4" y2="683.1" stroke="#000" stroke-width="0.99" stroke-dasharray="12 4" stroke-dashoffset="12"/>
<line x1="279.9" y1="787.4" x2="3.5" y2="1116.7" stroke="#000" stroke-width="0.99" stroke-dasharray="12 4"/>
<line x1="262.5" y1="771.5" x2="358.7" y2="675.3" stroke="#000" stroke-width="0.99" stroke-dasharray="12 4" stroke-dashoffset="12"/>
<line x1="262.5" y1="771.5" x2="-41.5" y2="1075.5" stroke="#000" stroke-width="0.99" stroke-dasharray="12 4"/>
<line x1="246.6" y1="754.1" x2="350.9" y2="666.6" stroke="#000" stroke-width="0.99" stroke-dasharray="12 4" stroke-dashoffset="12"/>
<line x1="246.6" y1="754.1" x2="-82.7" y2="1030.5" stroke="#000" stroke-width="0.99" stroke-dasharray="12 4"/>
<line x1="232.3" y1="735.4" x2="343.7" y2="657.4" stroke="#000" stroke-width="0.99" stroke-dasharray="12 4" stroke-dashoffset="12"/>
<line x1="232.3" y1="735.4" x2="-119.9" y2="982" stroke="#000" stroke-width="0.99" stroke-dasharray="12 4"/>
<line x1="219.6" y1="715.5" x2="337.5" y2="647.5" stroke="#000" stroke-width="0.99" stroke-dasharray="12 4" stroke-dashoffset="12"/>
<line x1="219.6" y1="715.5" x2="-152.7" y2="930.5" stroke="#000" stroke-width="0.99" stroke-dasharray="12 4"/>
<line x1="208.7" y1="694.6" x2="332.1" y2="637.1" stroke="#000" stroke-width="0.99" stroke-dasharray="12 4" stroke-dashoffset="12"/>
<line x1="208.7" y1="694.6" x2="-180.9" y2="876.3" stroke="#000" stroke-width="0.99" stroke-dasharray="12 4"/>
<line x1="199.7" y1="672.9" x2="327.6" y2="626.3" stroke="#000" stroke-width="0.99" stroke-dasharray="12 4" stroke-dashoffset="12"/>
<line x1="199.7" y1="672.9" x2="-204.3" y2="819.9" stroke="#000" stroke-width="0.99" stroke-dasharray="12 4"/>
<line x1="192.6" y1="650.4" x2="324.1" y2="615.2" stroke="#000" stroke-width="0.99" stroke-dasharray="12 4" stroke-dashoffset="12"/>
<line x1="192.6" y1="650.4" x2="-222.6" y2="761.7" stroke="#000" stroke-width="0.99" stroke-dasharray="12 4"/>
<line x1="187.5" y1="627.4" x2="321.5" y2="603.8" stroke="#000" stroke-width="0.99" stroke-dasharray="12 4" stroke-dashoffset="12"/>
<line x1="187.5" y1="627.4" x2="-235.9" y2="702.1" stroke="#000" stroke-width="0.99" stroke-dasharray="12 4"/>
<line x1="184.5" y1="604" x2="320" y2="592.2" stroke="#000" stroke-width="0.99" stroke-dasharray="12 4" stroke-dashoffset="12"/>
<line x1="184.5" y1="604" x2="-243.8" y2="641.5" stroke="#000" stroke-width="0.99" stroke-dasharray="12 4"/>
<line x1="453.5" y1="580.5" x2="319.5" y2="580.5" stroke="#000" stroke-width="0.99" stroke-dasharray="12 4" stroke-dashoffset="2"/>
<line x1="183.4" y1="580.5" x2="319.5" y2="580.5" stroke="#000" stroke-width="0.99" stroke-dasharray="12 4" stroke-dashoffset="12"/>
<line x1="183.4" y1="580.5" x2="-246.5" y2="580.5" stroke="#000" stroke-width="0.99" stroke-dasharray="12 4"/>
<line x1="184.5" y1="557" x2="320" y2="568.8" stroke="#000" stroke-width="0.99" stroke-dasharray="12 4" stroke-dashoffset="12"/>
<line x1="184.5" y1="557" x2="-243.8" y2="519.5" stroke="#000" stroke-width="0.99" stroke-dasharray="12 4"/>
<line x1="187.5" y1="533.6" x2="321.5" y2="557.2" stroke="#000" stroke-width="0.99" stroke-dasharray="12 4" stroke-dashoffset="12"/>
<line x1="187.5" y1="533.6" x2="-235.9" y2="458.9" stroke="#000" stroke-width="0.99" stroke-dasharray="12 4"/>
<line x1="192.6" y1="510.6" x2="324.1" y2="545.8" stroke="#000" stroke-width="0.99" stroke-dasharray="12 4" stroke-dashoffset="12"/>
<line x1="192.6" y1="510.6" x2="-222.6" y2="399.3" stroke="#000" stroke-width="0.99" stroke-dasharray="12 4"/>
<line x1="199.7" y1="488.1" x2="327.6" y2="534.7" stroke="#000" stroke-width="0.99" stroke-dasharray="12 4" stroke-dashoffset="12"/>
<line x1="199.7" y1="488.1" x2="-204.3" y2="341.1" stroke="#000" stroke-width="0.99" stroke-dasharray="12 4"/>
<line x1="208.7" y1="466.4" x2="332.1" y2="523.9" stroke="#000" stroke-width="0.99" stroke-dasharray="12 4" stroke-dashoffset="12"/>
<line x1="208.7" y1="466.4" x2="-180.9" y2="284.7" stroke="#000" stroke-width="0.99" stroke-dasharray="12 4"/>
<line x1="219.6" y1="445.5" x2="337.5" y2="513.5" stroke="#000" stroke-width="0.99" stroke-dasharray="12 4" stroke-dashoffset="12"/>
<line x1="219.6" y1="445.5" x2="-152.7" y2="230.5" stroke="#000" stroke-width="0.99" stroke-dasharray="12 4"/>
<line x1="232.3" y1="425.6" x2="343.7" y2="503.6" stroke="#000" stroke-width="0.99" stroke-dasharray="12 4" stroke-dashoffset="12"/>
<line x1="232.3" y1="425.6" x2="-119.9" y2="179" stroke="#000" stroke-width="0.99" stroke-dasharray="12 4"/>
<line x1="246.6" y1="406.9" x2="350.9" y2="494.4" stroke="#000" stroke-width="0.99" stroke-dasharray="12 4" stroke-dashoffset="12"/>
<line x1="246.6" y1="406.9" x2="-82.7" y2="130.5" stroke="#000" stroke-width="0.99" stroke-dasharray="12 4"/>
<line x1="262.5" y1="389.5" x2="358.7" y2="485.7" stroke="#000" stroke-width="0.99" stroke-dasharray="12 4" stroke-dashoffset="12"/>
<line x1="262.5" y1="389.5" x2="-41.5" y2="85.5" stroke="#000" stroke-width="0.99" stroke-dasharray="12 4"/>
<line x1="279.9" y1="373.6" x2="367.4" y2="477.9" stroke="#000" stroke-width="0.99" stroke-dasharray="12 4" stroke-dashoffset="12"/>
<line x1="279.9" y1="373.6" x2="3.5" y2="44.3" stroke="#000" stroke-width="0.99" stroke-dasharray="12 4"/>
<line x1="298.6" y1="359.3" x2="376.6" y2="470.7" stroke="#000" stroke-width="0.99" stroke-dasharray="12 4" stroke-dashoffset="12"/>
<line x1="298.6" y1="359.3" x2="52" y2="7.1" stroke="#000" stroke-width="0.99" stroke-dasharray="12 4"/>
<line x1="318.5" y1="346.6" x2="386.5" y2="464.5" stroke="#000" stroke-width="0.99" stroke-dasharray="12 4" stroke-dashoffset="12"/>
<line x1="318.5" y1="346.6" x2="103.5" y2="-25.7" stroke="#000" stroke-width="0.99" stroke-dasharray="12 4"/>
<line x1="339.4" y1="335.7" x2="396.9" y2="459.1" stroke="#000" stroke-width="0.99" stroke-dasharray="12 4" stroke-dashoffset="12"/>
<line x1="339.4" y1="335.7" x2="157.7" y2="-53.9" stroke="#000" stroke-width="0.99" stroke-dasharray="12 4"/>
<line x1="361.1" y1="326.7" x2="407.7" y2="454.6" stroke="#000" stroke-width="0.99" stroke-dasharray="12 4" stroke-dashoffset="12"/>
<line x1="361.1" y1="326.7" x2="214.1" y2="-77.3" stroke="#000" stroke-width="0.99" stroke-dasharray="12 4"/>
<line x1="383.6" y1="319.6" x2="418.8" y2="451.1" stroke="#000" stroke-width="0.99" stroke-dasharray="12 4" stroke-dashoffset="12"/>
<line x1="383.6" y1="319.6" x2="272.3" y2="-95.6" stroke="#000" stroke-width="0.99" stroke-dasharray="12 4"/>
<line x1="406.6" y1="314.5" x2="430.2" y2="448.5" stroke="#000" stroke-width="0.99" stroke-dasharray="12 4" stroke-dashoffset="12"/>
<line x1="406.6" y1="314.5" x2="331.9" y2="-108.9" stroke="#000" stroke-width="0.99" stroke-dasharray="12 4"/>
<line x1="430" y1="311.5" x2="441.8" y2="447" stroke="#000" stroke-width="0.99" stroke-dasharray="12 4" stroke-dashoffset="12"/>
<line x1="430" y1="311.5" x2="392.5" y2="-116.8" stroke="#000" stroke-width="0.99" stroke-dasharray="12 4"/>
</g>
<g clip-path="url(#mapclip)" shape-rendering="crispEdges">
<circle cx="473.3" cy="468" r="3.7" fill="#000"/>
<circle cx="461" cy="493.4" r="3.7" fill="#000"/>
<circle cx="444" cy="520.6" r="3.7" fill="#000"/>
<circle cx="454.5" cy="520" r="3.7" fill="#000"/>
<circle cx="448" cy="527.2" r="3.7" fill="#000"/>
<circle cx="467.2" cy="528.3" r="3.7" fill="#000"/>
<circle cx="453.5" cy="553.5" r="3.7" fill="#000"/>
<circle cx="520.5" cy="585" r="3.7" fill="#000"/>
<circle cx="453.5" cy="607.2" r="3.7" fill="#000"/>
<circle cx="459.4" cy="613.3" r="3.7" fill="#000"/>
<circle cx="502.6" cy="300.5" r="3.7" fill="#e31e52"/>
<circle cx="474.5" cy="338.6" r="3.7" fill="#e31e52"/>
<circle cx="453.4" cy="364.8" r="3.7" fill="#e31e52"/>
<circle cx="421.6" cy="381.3" r="3.7" fill="#e31e52"/>
<circle cx="392" cy="492.3" r="3.7" fill="#e31e52"/>
<circle cx="367.8" cy="549.3" r="3.7" fill="#e31e52"/>
<circle cx="395.5" cy="613.7" r="3.7" fill="#e31e52"/>
<circle cx="460.4" cy="620" r="3.7" fill="#e31e52"/>
<circle cx="453.5" cy="631.2" r="3.7" fill="#e31e52"/>
<circle cx="433.4" cy="468.2" r="3.7" fill="#8cff00"/>
</g>
<rect x="206" y="269" width="502" height="540" fill="none" stroke="#000" stroke-width="2"/>
<line x1="224" y1="810" x2="224" y2="822" stroke="#000" stroke-width="2"/>
<line x1="320.5" y1="810" x2="320.5" y2="822" stroke="#000" stroke-width="2"/>
<line x1="392" y1="810" x2="392" y2="822" stroke="#000" stroke-width="2"/>
<line x1="453.5" y1="810" x2="453.5" y2="822" stroke="#000" stroke-width="2"/>
<line x1="514.5" y1="810" x2="514.5" y2="822" stroke="#000" stroke-width="2"/>
<line x1="585" y1="810" x2="585" y2="822" stroke="#000" stroke-width="2"/>
<line x1="682" y1="810" x2="682" y2="822" stroke="#000" stroke-width="2"/>
<line x1="709" y1="324" x2="722" y2="324" stroke="#000" stroke-width="2"/>
<line x1="709" y1="432" x2="722" y2="432" stroke="#000" stroke-width="2"/>
<line x1="709" y1="510.5" x2="722" y2="510.5" stroke="#000" stroke-width="2"/>
<line x1="709" y1="580" x2="722" y2="580" stroke="#000" stroke-width="2"/>
<line x1="709" y1="648.5" x2="722" y2="648.5" stroke="#000" stroke-width="2"/>
<line x1="709" y1="727" x2="722" y2="727" stroke="#000" stroke-width="2"/>
<g font-family="Liberation Sans" font-size="32" fill="#000">
<text x="276.5" y="869">150°E</text>
<text x="419.5" y="869">180°</text>
<text x="537" y="869">150°W</text>
<text x="742.5" y="335">45°W</text>
<text x="742.5" y="444">60°W</text>
<text x="742.5" y="522">75°W</text>
<text x="742.5" y="591">90°W</text>
<text x="741" y="659" letter-spacing="-0.5">105°W</text>
<text x="741" y="738" letter-spacing="-0.5">120°W</text>
</g>

<g fill="none" stroke-width="2" shape-rendering="crispEdges">
<rect x="38" y="264" width="11" height="11" stroke="#000"/>
<rect x="38" y="354" width="11" height="11" stroke="#e31e52"/>
<rect x="38" y="444" width="11" height="10" stroke="#8cff00"/>
<rect x="38" y="534" width="11" height="10" stroke="#ff7000"/>
</g>
<g font-family="Liberation Sans" font-size="25" fill="#000">
<text x="78" y="265">low #1</text>
<text x="78" y="292">control</text>
<text x="78" y="355">low #2</text>
<text x="78" y="382">control</text>
<text x="78" y="428">low #1</text>
<text x="78" y="455">no latent</text>
<text x="78" y="482">heat exp</text>
<text x="78" y="518">low #2</text>
<text x="78" y="545">no latent</text>
<text x="78" y="572">heat exp</text>
</g>

</svg><!-- ===== TASKBAR ===== -->
<div class="a" style="left:0;top:1024px;width:1680px;height:26px;background:#dcdad5"></div>
<div class="a" style="left:0;top:1025px;width:32px;height:1px;background:#fff"></div>
<svg class="a" style="left:3px;top:1030px" width="16" height="15" viewBox="0 0 16 15">
 <path d="M0.8 1.8 Q0.8 0.8 1.8 0.8 L6 0.8 L7.5 2.3 L14 2.3 Q15.2 2.3 15.2 3.5 L15.2 13.5 Q15.2 14.4 14 14.4 L2 14.4 Q0.8 14.4 0.8 13.5 Z" fill="#8e8e78" stroke="#6a6a58" stroke-width="1.1"/>
 <path d="M1.3 5.2 L6.5 5.2 L8 3.8 L14.7 3.8 L14.7 13.8 L1.3 13.8 Z" fill="#d6d6c0"/>
 <rect x="6.4" y="7" width="3.2" height="4.2" rx="0.8" fill="none" stroke="#7a7a66" stroke-width="0.9"/>
 <path d="M3 7 L4 6.2 M13 7 L12 6.2 M3 12 L4 12.8 M13 12 L12 12.8" stroke="#7a7a66" stroke-width="0.9"/>
</svg>
<div class="a" style="left:21px;top:1025px;width:1px;height:25px;background:#000"></div>
<div class="a" style="left:22px;top:1025px;width:1px;height:24px;background:#fff"></div><div class="a" style="left:30px;top:1026px;width:1px;height:23px;background:#a09c94"></div>
<svg class="a" style="left:23px;top:1026px" width="7" height="22" shape-rendering="crispEdges"><g fill="#fff"><rect x="1" y="1" width="1" height="1"/><rect x="2" y="2" width="1" height="1"/><rect x="4" y="2" width="1" height="1"/><rect x="5" y="3" width="1" height="1"/><rect x="1" y="4" width="1" height="1"/><rect x="2" y="5" width="1" height="1"/><rect x="4" y="5" width="1" height="1"/><rect x="5" y="6" width="1" height="1"/><rect x="1" y="7" width="1" height="1"/><rect x="2" y="8" width="1" height="1"/><rect x="4" y="8" width="1" height="1"/><rect x="5" y="9" width="1" height="1"/><rect x="1" y="10" width="1" height="1"/><rect x="2" y="11" width="1" height="1"/><rect x="4" y="11" width="1" height="1"/><rect x="5" y="12" width="1" height="1"/><rect x="1" y="13" width="1" height="1"/><rect x="2" y="14" width="1" height="1"/><rect x="4" y="14" width="1" height="1"/><rect x="5" y="15" width="1" height="1"/><rect x="1" y="16" width="1" height="1"/><rect x="2" y="17" width="1" height="1"/><rect x="4" y="17" width="1" height="1"/><rect x="5" y="18" width="1" height="1"/><rect x="1" y="19" width="1" height="1"/><rect x="2" y="20" width="1" height="1"/><rect x="4" y="20" width="1" height="1"/><rect x="5" y="21" width="1" height="1"/></g></svg>
<div class="a" style="left:31px;top:1025px;width:1px;height:25px;background:#000"></div>

<div class="a" style="left:32px;top:1025px;width:110px;height:25px;background:#dcdad5">
<div class="a" style="left:0;top:0;width:109px;height:1px;background:#fff"></div><div class="a" style="left:0;top:0;width:1px;height:23px;background:#fff"></div><div class="a" style="left:109px;top:0;width:1px;height:25px;background:#000"></div><div class="a" style="left:0;top:23px;width:110px;height:1px;background:#9d9a93"></div>
<svg class="a" style="left:7px;top:5px" width="16" height="16" viewBox="0 0 16 16"><use href="#ic-chrome"/></svg>
<div class="a tbt" style="left:31px;top:6px">[New ph...</div>
</div>
<div class="a" style="left:142px;top:1025px;width:110px;height:25px;background:#dcdad5">
<div class="a" style="left:0;top:0;width:109px;height:1px;background:#fff"></div><div class="a" style="left:0;top:0;width:1px;height:23px;background:#fff"></div><div class="a" style="left:109px;top:0;width:1px;height:25px;background:#000"></div><div class="a" style="left:0;top:23px;width:110px;height:1px;background:#9d9a93"></div>
<svg class="a" style="left:7px;top:5px" width="16" height="16" viewBox="0 0 16 16"><use href="#ic-term"/></svg>
<div class="a tbt" style="left:31px;top:6px">asemen...</div>
</div>
<div class="a" style="left:252px;top:1025px;width:111px;height:25px;background:#dcdad5">
<div class="a" style="left:0;top:0;width:110px;height:1px;background:#fff"></div><div class="a" style="left:0;top:0;width:1px;height:23px;background:#fff"></div><div class="a" style="left:110px;top:0;width:1px;height:25px;background:#000"></div><div class="a" style="left:0;top:23px;width:111px;height:1px;background:#9d9a93"></div>
<svg class="a" style="left:7px;top:5px" width="16" height="16" viewBox="0 0 16 16"><use href="#ic-term"/></svg>
<div class="a tbt" style="left:31px;top:6px">asemen...</div>
</div>
<div class="a" style="left:363px;top:1025px;width:110px;height:25px;background:#dcdad5">
<div class="a" style="left:0;top:0;width:109px;height:1px;background:#fff"></div><div class="a" style="left:0;top:0;width:1px;height:23px;background:#fff"></div><div class="a" style="left:109px;top:0;width:1px;height:25px;background:#000"></div><div class="a" style="left:0;top:23px;width:110px;height:1px;background:#9d9a93"></div>
<svg class="a" style="left:7px;top:5px" width="16" height="16" viewBox="0 0 16 16"><use href="#ic-term"/></svg>
<div class="a tbt" style="left:31px;top:6px">asemen...</div>
</div>
<div class="a" style="left:473px;top:1025px;width:110px;height:25px;background:#dcdad5">
<div class="a" style="left:0;top:0;width:109px;height:1px;background:#fff"></div><div class="a" style="left:0;top:0;width:1px;height:23px;background:#fff"></div><div class="a" style="left:109px;top:0;width:1px;height:25px;background:#000"></div><div class="a" style="left:0;top:23px;width:110px;height:1px;background:#9d9a93"></div>
<svg class="a" style="left:7px;top:5px" width="16" height="16" viewBox="0 0 16 16"><use href="#ic-term"/></svg>
<div class="a tbt" style="left:31px;top:6px">asemen...</div>
</div>
<div class="a" style="left:583px;top:1025px;width:110px;height:25px;background:#dcdad5">
<div class="a" style="left:0;top:0;width:109px;height:1px;background:#fff"></div><div class="a" style="left:0;top:0;width:1px;height:23px;background:#fff"></div><div class="a" style="left:109px;top:0;width:1px;height:25px;background:#000"></div><div class="a" style="left:0;top:23px;width:110px;height:1px;background:#9d9a93"></div>
<svg class="a" style="left:7px;top:5px" width="16" height="16" viewBox="0 0 16 16"><use href="#ic-dl"/></svg>
<div class="a tbt" style="left:31px;top:6px">Downlo...</div>
</div>
<div class="a" style="left:693px;top:1025px;width:111px;height:25px;background:#dcdad5">
<div class="a" style="left:0;top:0;width:110px;height:1px;background:#fff"></div><div class="a" style="left:0;top:0;width:1px;height:23px;background:#fff"></div><div class="a" style="left:110px;top:0;width:1px;height:25px;background:#000"></div><div class="a" style="left:0;top:23px;width:111px;height:1px;background:#9d9a93"></div>
<svg class="a" style="left:7px;top:5px" width="16" height="16" viewBox="0 0 16 16"><use href="#ic-term"/></svg>
<div class="a tbt" style="left:31px;top:6px">asemen...</div>
</div>
<div class="a" style="left:804px;top:1025px;width:110px;height:25px;background:#dcdad5">
<div class="a" style="left:0;top:0;width:109px;height:1px;background:#fff"></div><div class="a" style="left:0;top:0;width:1px;height:23px;background:#fff"></div><div class="a" style="left:109px;top:0;width:1px;height:25px;background:#000"></div><div class="a" style="left:0;top:23px;width:110px;height:1px;background:#9d9a93"></div>
<svg class="a" style="left:7px;top:5px" width="16" height="16" viewBox="0 0 16 16"><use href="#ic-term"/></svg>
<div class="a tbt" style="left:31px;top:6px">asemen...</div>
</div>
<div class="a" style="left:914px;top:1025px;width:111px;height:25px;background:#c9c6c0">
<div class="a" style="left:0;top:0;width:111px;height:2px;background:#000"></div><div class="a" style="left:0;top:0;width:2px;height:24px;background:#000"></div>
<svg class="a" style="left:7px;top:5px" width="16" height="16" viewBox="0 0 16 16"><use href="#ic-win"/></svg>
<div class="a tbt" style="left:31px;top:6px">obs-dat...</div>
</div><div class="a" style="left:0;top:1049px;width:913px;height:1px;background:#000"></div>
<!-- workspace switcher -->
<div class="a" style="left:1027px;top:1027px;width:189px;height:21px;background:#fff"></div>
<div class="a" style="left:1027px;top:1027px;width:188px;height:1px;background:#000"></div>
<div class="a" style="left:1027px;top:1027px;width:1px;height:20px;background:#000"></div>
<div class="a" style="left:1028px;top:1028px;width:186px;height:19px;background:#9e9991"></div>
<div class="a" style="left:1028px;top:1028px;width:31px;height:19px;background:#4f7196;border:1px solid #fff"></div>
<div class="a" style="left:1030px;top:1030px;width:14px;height:15px;background:#5f8dbb"></div>
<div class="a" style="left:1045px;top:1031px;width:5px;height:12px;background:#2e3436;border:1px solid #b8b8b4"></div>
<div class="a" style="left:1060px;top:1028px;width:16px;height:18px;background:#dcdad5;border:1.5px solid #000"></div>
<div class="a" style="left:1090px;top:1028px;width:1px;height:19px;background:#dcdad5"></div>
<div class="a" style="left:1121px;top:1028px;width:1px;height:19px;background:#dcdad5"></div>
<div class="a" style="left:1152px;top:1028px;width:1px;height:19px;background:#dcdad5"></div>
<div class="a" style="left:1183px;top:1028px;width:1px;height:19px;background:#dcdad5"></div>
<div class="a ui" style="left:1220px;top:1030px;font-size:14.5px;letter-spacing:0.35px">Fri Mar 30, 11:30 AM</div>
<div class="a" style="left:1381px;top:1038px;width:4px;height:2px;background:#000"></div>
<div class="a" style="left:1386px;top:1038px;width:4px;height:2px;background:#000"></div>
<svg class="a" style="left:1392px;top:1026px" width="23" height="22" viewBox="0 0 23 22">
 <rect x="0.5" y="0.5" width="21.5" height="20.5" rx="1.5" fill="#4ea40e" stroke="#3a8a08"/>
 <rect x="2" y="2" width="4" height="17" fill="#6cb52c"/>
 <rect x="16.5" y="2" width="4" height="17" fill="#5aac18"/>
 <rect x="5" y="1.5" width="12" height="19" fill="#fff"/>
 <circle cx="13.6" cy="3.7" r="1.6" fill="#4ea40e"/>
 <path d="M7.5 9.5 L9 6.5 L13 6.5 L14.5 9 L16.5 9.5 M12 6.8 L10.5 12 L7 14 L5 14.5 M10.5 12 L13 15 L14 20 M6 19.5 L7 16" fill="none" stroke="#4ea40e" stroke-width="1.8" stroke-linecap="round"/>
</svg>

</div></body></html>
